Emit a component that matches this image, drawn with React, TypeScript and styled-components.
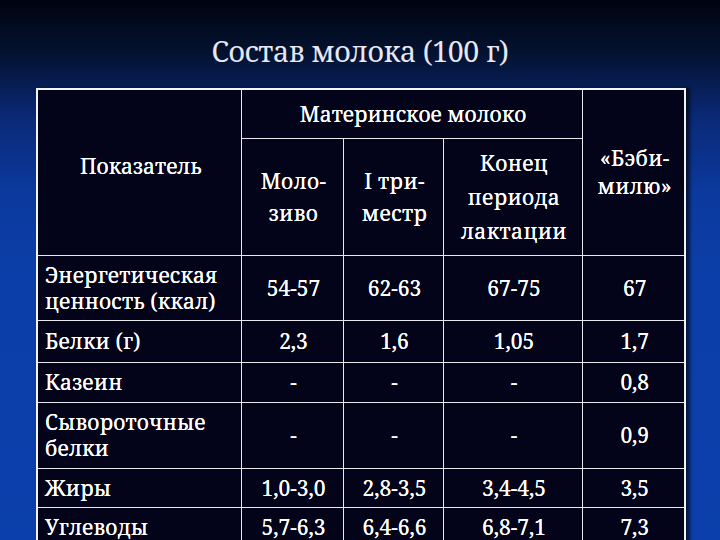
import React from "react";
import styled, { createGlobalStyle } from "styled-components";

const GlobalStyle = createGlobalStyle`
  html, body {
    margin: 0;
    padding: 0;
  }
  body {
    font-family: "Noto Serif", "DejaVu Serif", serif;
  }
`;

const Slide = styled.div`
  width: 720px;
  height: 540px;
  overflow: hidden;
  background: linear-gradient(
    to bottom,
    #00040e 0%,
    #041232 10%,
    #0a2a78 22%,
    #0b3a9e 36%,
    #0b3ea8 50%,
    #0b3fab 100%
  );
  display: flex;
  flex-direction: column;
  align-items: center;
`;

const Title = styled.h1`
  flex-shrink: 0;
  margin: 31px 0 0;
  height: 57px;
  font-family: "Noto Serif", "DejaVu Serif", serif;
  font-weight: normal;
  font-size: 28.5px;
  line-height: 40px;
  letter-spacing: -0.4px;
  color: #e6e8f2;
`;

const Table = styled.table`
  flex-shrink: 0;
  width: 648px;
  margin-left: 2px;
  border-collapse: collapse;
  table-layout: fixed;
  background: #03041a;
  border: 2px solid #f4f4f8;
  box-shadow: 4px 0 3px rgba(0, 0, 0, 0.6);
  color: #ffffff;
  font-family: "Noto Serif", "DejaVu Serif", serif;
  font-size: 21px;
  text-shadow: 0 0 0.5px #ffffff;
`;

const Row = styled.tr<{ $h: number }>`
  height: ${(p) => p.$h}px;
`;

const Cell = styled.td<{ $align?: "left" | "center"; $lh?: number; $ls?: number }>`
  border: 1px solid #e8e8ee;
  padding: 0 4px 0 7px;
  text-align: ${(p) => p.$align ?? "center"};
  vertical-align: middle;
  line-height: ${(p) => p.$lh ?? 26}px;
  letter-spacing: ${(p) => p.$ls ?? 0}px;
  font-weight: normal;
`;

const cols = [204, 102, 100, 139, 103];

const rows: [string[], string[], number][] = [
  [["Энергетическая", "ценность (ккал)"], ["54-57", "62-63", "67-75", "67"], 65],
  [["Белки (г)"], ["2,3", "1,6", "1,05", "1,7"], 42],
  [["Казеин"], ["-", "-", "-", "0,8"], 40],
  [["Сывороточные", "белки"], ["-", "-", "-", "0,9"], 66],
  [["Жиры"], ["1,0-3,0", "2,8-3,5", "3,4-4,5", "3,5"], 39],
  [["Углеводы"], ["5,7-6,3", "6,4-6,6", "6,8-7,1", "7,3"], 40],
];

const Lines: React.FC<{ parts: string[] }> = ({ parts }) => (
  <>
    {parts.map((p, i) => (
      <React.Fragment key={i}>
        {i > 0 && <br />}
        {p}
      </React.Fragment>
    ))}
  </>
);

const Lifted = styled.div`
  margin-top: -12px;
`;

export default function App() {
  return (
    <>
      <GlobalStyle />
      <Slide>
        <Title>Состав молока (100 г)</Title>
        <Table>
          <colgroup>
            {cols.map((w, i) => (
              <col key={i} style={{ width: w }} />
            ))}
          </colgroup>
          <tbody>
            <Row $h={49}>
              <Cell as="th" rowSpan={2}>
                <Lifted>Показатель</Lifted>
              </Cell>
              <Cell as="th" colSpan={3}>
                Материнское молоко
              </Cell>
              <Cell as="th" rowSpan={2} $lh={28} $ls={0.4}>
                <Lines parts={["«Бэби-", "милю»"]} />
              </Cell>
            </Row>
            <Row $h={117}>
              <Cell as="th" $lh={32} $ls={0.4}>
                <Lines parts={["Моло-", "зиво"]} />
              </Cell>
              <Cell as="th" $lh={32} $ls={0.4}>
                <Lines parts={["I три-", "местр"]} />
              </Cell>
              <Cell as="th" $lh={34} $ls={0.4}>
                <Lines parts={["Конец", "периода", "лактации"]} />
              </Cell>
            </Row>
            {rows.map(([label, vals, h], i) => (
              <Row key={i} $h={h}>
                <Cell $align="left" $ls={0.2}>
                  <Lines parts={label} />
                </Cell>
                {vals.map((v, j) => (
                  <Cell key={j}>{v}</Cell>
                ))}
              </Row>
            ))}
          </tbody>
        </Table>
      </Slide>
    </>
  );
}
